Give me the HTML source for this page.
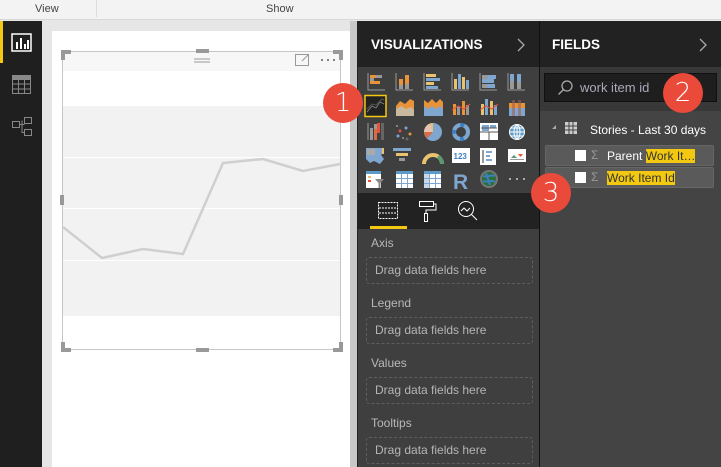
<!DOCTYPE html>
<html><head><meta charset="utf-8"><style>
*{margin:0;padding:0;box-sizing:border-box}
body{width:721px;height:467px;overflow:hidden;position:relative;font-family:"Liberation Sans",sans-serif;background:#e6e6e6}
.a{position:absolute}
.well{position:absolute;left:366px;width:167px;height:27px;border:1px dashed #5e5e5e;border-radius:3px;color:#b5b5b5;font-size:12px;line-height:25px;padding-left:8px}
.lab{position:absolute;left:371px;color:#b8b8b8;font-size:12px}
.badge{position:absolute;width:40px;height:40px;border-radius:50%;background:#ea4a3a;color:#fff;font-size:26px;text-align:center;line-height:40px;font-family:"DejaVu Sans",sans-serif;font-weight:300}
</style></head><body>
<div class="a" style="left:0;top:0;width:721px;height:20px;background:#f3f3f3;border-bottom:1px solid #d8d8d8"></div>
<div class="a" style="left:96px;top:0;width:1px;height:17px;background:#ddd"></div>
<div class="a" style="left:35px;top:3px;font-size:11px;color:#444">View</div>
<div class="a" style="left:266px;top:3px;font-size:11px;color:#444">Show</div>
<div class="a" style="left:0;top:21px;width:42px;height:446px;background:#1f1f1f"></div>
<div class="a" style="left:0;top:21px;width:3px;height:42px;background:#f2c811"></div>
<svg class="a" style="left:11px;top:33px" width="22" height="20"><rect x="1" y="1" width="19" height="17" fill="none" stroke="#fff" stroke-width="1.5"/><rect x="5" y="9" width="2" height="7" fill="#fff"/><rect x="9" y="5" width="2" height="11" fill="#fff"/><rect x="13" y="11" width="2" height="5" fill="#fff"/><rect x="16" y="7" width="2" height="9" fill="#fff"/></svg>
<svg class="a" style="left:11px;top:74px" width="22" height="22" stroke="#888" fill="none"><rect x="1.5" y="1.5" width="18" height="18"/><rect x="1.5" y="1.5" width="18" height="4" fill="#888"/><path d="M7.5 5v14M13.5 5v14M1.5 10h18M1.5 15h18"/></svg>
<svg class="a" style="left:11px;top:116px" width="22" height="22" stroke="#888" fill="none"><rect x="1.5" y="5.5" width="7" height="6"/><rect x="13.5" y="1.5" width="7" height="6"/><rect x="13.5" y="13.5" width="7" height="6"/><path d="M8.5 8.5h5M11 4.5v12h2.5"/></svg>
<div class="a" style="left:52px;top:31px;width:298px;height:436px;background:#fff"></div>
<div class="a" style="left:350px;top:21px;width:8px;height:446px;background:#c8c8c8"></div>
<div class="a" style="left:357px;top:21px;width:1px;height:446px;background:#222"></div>
<div class="a" style="left:62px;top:51px;width:279px;height:299px;border:1px solid #c6c6c6;background:#fff"></div>
<div class="a" style="left:63px;top:52px;width:277px;height:19px;background:#f7f7f7"></div>
<div class="a" style="left:63px;top:106px;width:277px;height:210px;background:#f2f2f2"></div>
<div class="a" style="left:63px;top:157px;width:277px;height:1px;background:#fff"></div>
<div class="a" style="left:63px;top:208px;width:277px;height:1px;background:#fff"></div>
<div class="a" style="left:63px;top:260px;width:277px;height:1px;background:#fff"></div>
<svg class="a" style="left:0;top:0" width="360" height="360">
<polyline points="63,227 102,258 143,249 183,254 223,163 263,159 303,171 340,164" fill="none" stroke="#cfcfcf" stroke-width="2.5"/>
<g fill="#999"><path d="M61 50h10v4h-6v6h-4z"/><path d="M343 50h-10v4h6v6h4z"/><path d="M61 352h10v-4h-6v-6h-4z"/><path d="M343 352h-10v-4h6v-6h4z"/>
<rect x="196" y="49" width="13" height="4"/><rect x="196" y="348" width="13" height="4"/><rect x="60" y="195" width="4" height="10"/><rect x="339" y="195" width="4" height="10"/></g>
<path d="M194 59h16M194 62h16" stroke="#999"/>
<rect x="295.5" y="54.5" width="13" height="11" fill="none" stroke="#999"/><path d="M302 61l7-7" stroke="#999"/>
<g fill="#777"><circle cx="322" cy="60" r="1.1"/><circle cx="328" cy="60" r="1.1"/><circle cx="334" cy="60" r="1.1"/></g>
</svg>
<div class="a" style="left:358px;top:21px;width:182px;height:446px;background:#3f3f3f"></div>
<div class="a" style="left:358px;top:21px;width:182px;height:46px;background:#222"></div>
<div class="a" style="left:371px;top:37px;color:#fff;font-size:13.5px;font-weight:bold">VISUALIZATIONS</div>
<svg class="a" style="left:516px;top:38px" width="10" height="14" fill="none" stroke="#aaa" stroke-width="1.3"><path d="M2 1l6 6-6 6"/></svg>
<div class="a" style="left:358px;top:193px;width:182px;height:36px;background:#222"></div>
<div class="a" style="left:370px;top:226px;width:37px;height:3px;background:#f2c811"></div>
<svg class="a" style="left:358px;top:193px" width="182" height="36" stroke="#fff" fill="none"><rect x="20.5" y="9.5" width="19" height="16" stroke-dasharray="2 1"/><path d="M21 15h18M21 20h18" stroke-dasharray="2 1"/><rect x="61.5" y="8.5" width="14" height="5"/><path d="M75 11h3v6h-10v3"/><rect x="66.5" y="20.5" width="3" height="8"/><circle cx="108" cy="16" r="7.5"/><path d="M113 21l6 6M103 18l3-3 3 3 3-3"/></svg>
<svg class="a" style="left:358px;top:66px" width="182" height="128">
<g fill="#e8923a"><rect x="12" y="9" width="6" height="3"/><rect x="12" y="15" width="10" height="3"/></g><g fill="#999"><rect x="18" y="9" width="6" height="3"/><rect x="12" y="12" width="4" height="3"/></g><path d="M10 7v17h17" stroke="#999" fill="none"/>
<g fill="#e8923a"><rect x="41" y="13" width="4" height="6"/><rect x="47" y="9" width="4" height="9"/></g><g fill="#999"><rect x="41" y="19" width="4" height="4"/><rect x="47" y="18" width="4" height="5"/></g><path d="M38 7v17h17" stroke="#999" fill="none"/>
<g fill="#e8c26e"><rect x="68" y="8" width="10" height="3"/><rect x="68" y="16" width="8" height="3"/></g><g fill="#7fa6cf"><rect x="68" y="12" width="14" height="3"/><rect x="68" y="20" width="12" height="3"/></g><path d="M66 7v17h17" stroke="#999" fill="none"/>
<g fill="#e8c26e"><rect x="96" y="13" width="3" height="10"/><rect x="104" y="11" width="3" height="12"/></g><g fill="#7fa6cf"><rect x="100" y="8" width="3" height="15"/><rect x="108" y="14" width="3" height="9"/></g><path d="M94 7v17h17" stroke="#999" fill="none"/>
<g fill="#999"><rect x="124" y="9" width="6" height="4"/><rect x="124" y="18" width="5" height="4"/></g><g fill="#7fa6cf"><rect x="130" y="9" width="8" height="4"/><rect x="124" y="13" width="12" height="4"/><rect x="129" y="18" width="8" height="4"/></g><path d="M122 7v17h17" stroke="#999" fill="none"/>
<g fill="#999"><rect x="152" y="15" width="4" height="8"/><rect x="159" y="16" width="4" height="7"/></g><g fill="#7fa6cf"><rect x="152" y="8" width="4" height="7"/><rect x="159" y="8" width="4" height="8"/></g><path d="M150 7v17h17" stroke="#999" fill="none"/>
<rect x="7" y="29.5" width="21" height="21" fill="#222" stroke="#f2c811" stroke-width="1.5"/><polyline points="9,46 14,40 18,42 22,36 26,38" fill="none" stroke="#777"/><polyline points="9,43 14,38 18,39 24,33 26,34" fill="none" stroke="#555"/>
<path d="M38 50v-10l4-5 5 3 5-5 4 2v15z" fill="#e8923a"/><path d="M38 50v-7l5-3 5 3 5-2 3 3v6z" fill="#c9b8a0"/>
<path d="M66 50v-16l4 3 4-4 4 4 4-4 3 3v14z" fill="#e8923a"/><path d="M66 50v-10l4 3 4-3 4 3 4-3 3 3v7z" fill="#7fa6cf"/>
<g fill="#e8923a"><rect x="95" y="38" width="3" height="11"/><rect x="104" y="35" width="3" height="14"/></g><g fill="#999"><rect x="99" y="41" width="3" height="8"/><rect x="108" y="39" width="3" height="10"/></g><polyline points="94,44 100,40 106,43 112,38" stroke="#e8503a" fill="none"/>
<g fill="#e8c26e"><rect x="123" y="38" width="3" height="11"/><rect x="132" y="35" width="3" height="14"/></g><g fill="#7fa6cf"><rect x="127" y="33" width="3" height="16"/><rect x="136" y="39" width="3" height="10"/></g><polyline points="122,44 128,40 134,43 140,38" stroke="#e8503a" fill="none"/>
<g fill="#e8923a"><rect x="151" y="37" width="16" height="5"/></g><g fill="#7fa6cf"><rect x="151" y="42" width="16" height="8"/></g><g fill="#a06050"><rect x="154" y="34" width="3" height="16" opacity=".6"/><rect x="160" y="34" width="3" height="16" opacity=".6"/></g>
<path d="M10 57v17" stroke="#999"/><g fill="#999"><rect x="12" y="62" width="3" height="12"/><rect x="16" y="58" width="3" height="5"/></g><rect x="19" y="57" width="3" height="10" fill="#e8503a"/><rect x="23" y="57" width="3" height="17" fill="#666"/><rect x="16" y="63" width="3" height="11" fill="#d56e45"/>
<g fill="#999"><circle cx="39" cy="60" r="1"/><circle cx="45" cy="72" r="1"/></g><circle cx="42" cy="65" r="1.5" fill="#e8503a"/><circle cx="48" cy="62" r="1.5" fill="#7fa6cf"/><circle cx="52" cy="68" r="1.5" fill="#e8923a"/><circle cx="40" cy="70" r="1.5" fill="#7fa6cf"/><circle cx="49" cy="73" r="1.5" fill="#666"/>
<circle cx="75" cy="66" r="9" fill="#7fa6cf"/><path d="M75 66l-9 0a9 9 0 0 1 6 -8.5z" fill="#e8c2b0"/><path d="M75 66l-3 -8.5a9 9 0 0 1 3 -0.5z" fill="#e8c26e"/><path d="M75 66l-9 0a9 9 0 0 0 3 6.5z" fill="#d56e45"/>
<circle cx="103" cy="66" r="7" fill="none" stroke="#3f7fc0" stroke-width="4"/><circle cx="103" cy="66" r="7" fill="none" stroke="#7fa6cf" stroke-width="4" stroke-dasharray="8 4"/>
<rect x="122" y="57" width="18" height="17" fill="#fff"/><g fill="#7fa6cf"><rect x="124" y="59" width="7" height="6"/><rect x="132" y="59" width="6" height="3"/></g><path d="M122 66h18M131 66v8M123 62h16" stroke="#555"/>
<circle cx="159" cy="66" r="8" fill="#fff"/><circle cx="159" cy="66" r="7" fill="#5e9ac8"/><path d="M152 66h14M159 59v14M153 62h12M153 70h12" stroke="#fff"/><ellipse cx="159" cy="66" rx="3" ry="7" fill="none" stroke="#fff"/>
<path d="M8 82h16l2 4-3 3 3 4-4 5-6-3-4 2-4-4z" fill="#7fa6cf"/><path d="M9 83h8v6h-8z" fill="#aaa"/><rect x="24" y="82" width="2" height="6" fill="#e8c26e"/>
<g fill="#7fa6cf"><rect x="35" y="82" width="18" height="3"/></g><rect x="38" y="87" width="12" height="3" fill="#e8c26e"/><rect x="41" y="92" width="6" height="3" fill="#999"/>
<path d="M66 98a9 9 0 0 1 18 0" fill="none" stroke="#e8c26e" stroke-width="4"/><path d="M80 90.5a9 9 0 0 1 4 7.5" fill="none" stroke="#5a9a70" stroke-width="4"/>
<rect x="94" y="82" width="18" height="15" fill="#fff"/><text x="95.5" y="93" font-size="8" fill="#3f7fc0" font-family="Liberation Sans" font-weight="bold">123</text>
<rect x="122" y="82" width="16" height="17" fill="#fff"/><rect x="124" y="84" width="2" height="13" fill="#999"/><g fill="#7fa6cf"><rect x="128" y="85" width="6" height="2"/><rect x="128" y="89" width="4" height="2"/><rect x="128" y="93" width="6" height="2"/></g>
<rect x="150" y="83" width="18" height="13" fill="#fff"/><path d="M153 92l3-3 3 3z" fill="#5a9a70"/><path d="M160 88h5l-2.5 3z" fill="#e8503a"/><rect x="152" y="93" width="14" height="1" fill="#999"/>
<rect x="8" y="105" width="15" height="17" fill="#fff"/><rect x="8" y="105" width="15" height="3" fill="#5e9ac8"/><rect x="10" y="110" width="3" height="2" fill="#e8c26e"/><rect x="10" y="114" width="3" height="2" fill="#e8503a"/><path d="M17 113h9l-3.5 4v5h-2v-5z" fill="#888"/>
<rect x="38" y="105" width="17" height="17" fill="#fff"/><rect x="38" y="105" width="17" height="3" fill="#5e9ac8"/><path d="M43.5 108v14M49.5 108v14M38 112.5h17M38 117.5h17" stroke="#7fa6cf"/>
<rect x="66" y="105" width="17" height="17" fill="#fff"/><rect x="66" y="105" width="17" height="3" fill="#5e9ac8"/><rect x="66" y="108" width="5" height="14" fill="#c8d8ea"/><path d="M71.5 108v14M77.5 108v14M66 112.5h17M66 117.5h17" stroke="#7fa6cf"/>
<text x="95" y="123" font-size="21" fill="#7fa6cf" font-family="Liberation Sans" font-weight="bold">R</text>
<circle cx="131" cy="113" r="9" fill="#777"/><circle cx="131" cy="113" r="7" fill="#2a6f3a"/><path d="M125 110c4 2 8-2 12 0M125 115c4 2 8-2 12 1M128 107l4 12" stroke="#3f7fc0" stroke-width="2" fill="none"/>
<g fill="#aaa"><rect x="151" y="112" width="2" height="2"/><rect x="158" y="112" width="2" height="2"/><rect x="165" y="112" width="2" height="2"/></g>
</svg>
<div class="lab" style="top:236px">Axis</div>
<div class="well" style="top:257px">Drag data fields here</div>
<div class="lab" style="top:296px">Legend</div>
<div class="well" style="top:317px">Drag data fields here</div>
<div class="lab" style="top:356px">Values</div>
<div class="well" style="top:377px">Drag data fields here</div>
<div class="lab" style="top:416px">Tooltips</div>
<div class="well" style="top:437px">Drag data fields here</div>
<div class="a" style="left:539px;top:21px;width:1px;height:446px;background:#111"></div>
<div class="a" style="left:540px;top:21px;width:181px;height:446px;background:#444"></div>
<div class="a" style="left:540px;top:21px;width:181px;height:46px;background:#222"></div>
<div class="a" style="left:540px;top:67px;width:181px;height:44px;background:#383838"></div>
<div class="a" style="left:552px;top:37px;color:#fff;font-size:13.5px;font-weight:bold">FIELDS</div>
<svg class="a" style="left:698px;top:38px" width="10" height="14" fill="none" stroke="#aaa" stroke-width="1.3"><path d="M2 1l6 6-6 6"/></svg>
<div class="a" style="left:544px;top:73px;width:173px;height:29px;background:#1e1e1e;border:1px solid #111"></div>
<svg class="a" style="left:556px;top:79px" width="18" height="18" fill="none" stroke="#aaa" stroke-width="1.3"><circle cx="11" cy="7" r="5"/><path d="M7.5 10.5l-5 5"/></svg>
<div class="a" style="left:580px;top:80px;color:#aab;font-size:13px">work item id</div>
<div class="a" style="left:552px;top:125px;width:0;height:0;border-left:4px solid transparent;border-bottom:4px solid #aaa"></div>
<svg class="a" style="left:565px;top:122px" width="12" height="12" fill="#ccc"><rect x="0" y="0" width="12" height="12"/><path d="M0 4h12M0 8h12M4 0v12M8 0v12" stroke="#444" stroke-width="1"/></svg>
<div class="a" style="left:590px;top:123px;color:#fff;font-size:12px">Stories - Last 30 days</div>
<div class="a" style="left:545px;top:145px;width:169px;height:21px;background:#5a5a5a;border:1px solid #666;border-radius:2px"></div>
<div class="a" style="left:545px;top:167px;width:169px;height:21px;background:#5a5a5a;border:1px solid #666;border-radius:2px"></div>
<div class="a" style="left:575px;top:150px;width:11px;height:11px;background:#fff"></div>
<div class="a" style="left:575px;top:172px;width:11px;height:11px;background:#fff"></div>
<div class="a" style="left:591px;top:148px;color:#999;font-size:12px">Σ</div>
<div class="a" style="left:591px;top:170px;color:#999;font-size:12px">Σ</div>
<div class="a" style="left:607px;top:149px;color:#fff;font-size:12px">Parent <span style="background:#f2c811;color:#333">Work It…</span></div>
<div class="a" style="left:607px;top:171px;font-size:12px"><span style="background:#f2c811;color:#333">Work Item Id</span></div>
<div class="badge" style="left:323px;top:83px">1</div>
<div class="badge" style="left:663px;top:73px">2</div>
<div class="badge" style="left:531px;top:173px">3</div>
</body></html>
